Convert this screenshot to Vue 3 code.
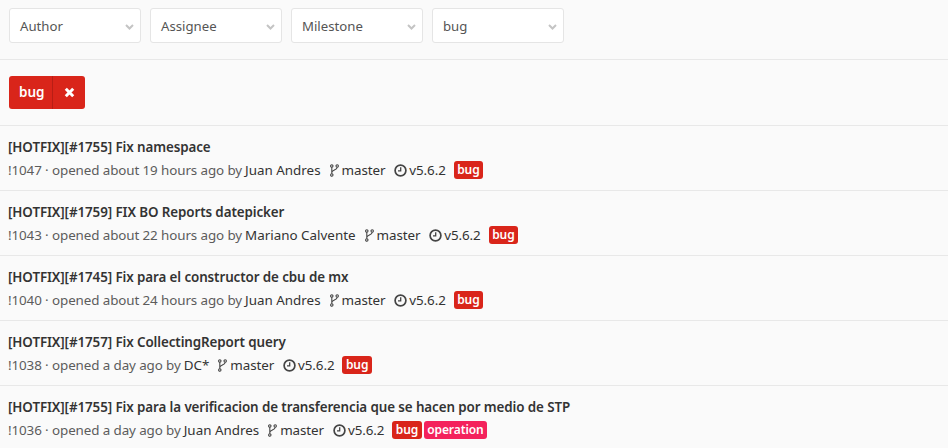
<script setup>
const filters = ["Author", "Assignee", "Milestone", "bug"];

const rows = [
  { title: "[HOTFIX][#1755] Fix namespace", id: "!1047", age: "about 19 hours ago", author: "Juan Andres", labels: ["bug"] },
  { title: "[HOTFIX][#1759] FIX BO Reports datepicker", id: "!1043", age: "about 22 hours ago", author: "Mariano Calvente", labels: ["bug"] },
  { title: "[HOTFIX][#1745] Fix para el constructor de cbu de mx", id: "!1040", age: "about 24 hours ago", author: "Juan Andres", labels: ["bug"] },
  { title: "[HOTFIX][#1757] Fix CollectingReport query", id: "!1038", age: "a day ago", author: "DC*", labels: ["bug"] },
  { title: "[HOTFIX][#1755] Fix para la verificacion de transferencia que se hacen por medio de STP", id: "!1036", age: "a day ago", author: "Juan Andres", labels: ["bug", "operation"] },
];
</script>

<template>
  <div class="page">
    <div class="filters">
      <div v-for="f in filters" :key="f" class="dropdown">
        <span>{{ f }}</span>
        <svg class="chevron" width="9" height="6" viewBox="0 0 9 6">
          <path d="M1 1 L4.5 4.5 L8 1" fill="none" stroke="#c4c4c4" stroke-width="2" />
        </svg>
      </div>
    </div>
    <div class="active">
      <div class="active-tag">
        <span class="active-name">bug</span>
        <span class="active-close">
          <svg width="11" height="11" viewBox="0 0 11 11">
            <path d="M1.8 1.8 L9.2 9.2 M9.2 1.8 L1.8 9.2" stroke="#fff" stroke-width="3" />
          </svg>
        </span>
      </div>
    </div>
    <ul class="list">
      <li v-for="r in rows" :key="r.id" class="row">
        <div class="title">{{ r.title }}</div>
        <div class="meta">
          <span class="muted">{{ r.id }} · opened {{ r.age }} by</span>
          <span class="author">{{ r.author }}</span>
          <span class="item">
            <svg class="branch" width="9" height="13" viewBox="0 0 9 13">
              <g fill="none" stroke="#444" stroke-width="1.1">
                <circle cx="1.8" cy="2" r="1.2" />
                <circle cx="7.2" cy="2" r="1.2" />
                <circle cx="1.8" cy="11" r="1.2" />
                <path d="M1.8 3.2 V9.8 M7.2 3.2 C7.2 6 1.8 6 1.8 8.5" />
              </g>
            </svg>
            master
          </span>
          <span class="item version">
            <svg class="clock" width="13" height="13" viewBox="0 0 13 13">
              <circle cx="6.5" cy="6.5" r="5.4" fill="none" stroke="#444" stroke-width="1.7" />
              <path d="M6.7 3.2 V6.9 H4" fill="none" stroke="#444" stroke-width="1.3" />
            </svg>
            v5.6.2
          </span>
          <span class="labels">
            <span v-for="l in r.labels" :key="l" class="label" :class="'label-' + l">{{ l }}</span>
          </span>
        </div>
      </li>
    </ul>
  </div>
</template>

<style>
body {
  margin: 0;
  background: #fafafa;
}
</style>

<style scoped>
.page {
  width: 948px;
  height: 448px;
  overflow: hidden;
  background: #fafafa;
  font-family: "Noto Sans", "Liberation Sans", sans-serif;
  color: #333;
}
.filters {
  display: flex;
  gap: 9px;
  height: 51px;
  padding: 8px 0 0 9px;
  border-bottom: 1px solid #e8e8e8;
}
.dropdown {
  width: 132px;
  height: 35px;
  box-sizing: border-box;
  display: flex;
  align-items: center;
  justify-content: space-between;
  padding: 0 6px 0 10px;
  background: #fff;
  border: 1px solid #e5e5e5;
  border-radius: 3px;
  font-size: 13.2px;
  color: #555;
}
.chevron {
  margin-top: 3px;
}
.active {
  height: 66px;
  box-sizing: border-box;
  padding: 16px 0 0 9px;
  border-bottom: 1px solid #e8e8e8;
}
.active-tag {
  display: inline-flex;
  height: 33px;
  background: #d9251a;
  border-radius: 3px;
  color: #fff;
  font-size: 13.5px;
  font-weight: 600;
  line-height: 32px;
}
.active-name {
  width: 44px;
  padding-left: 10px;
  box-sizing: border-box;
  border-right: 1px solid #b81e15;
}
.active-close {
  width: 32px;
  display: flex;
  align-items: center;
  justify-content: center;
}
.list {
  list-style: none;
  margin: 0;
  padding: 0;
}
.row {
  height: 65px;
  box-sizing: border-box;
  padding: 12px 0 0 8px;
  border-bottom: 1px solid #e8e8e8;
}
.title {
  font-size: 13.4px;
  font-weight: 600;
  line-height: 19px;
  letter-spacing: -0.1px;
}
.meta {
  display: flex;
  align-items: center;
  margin-top: 3px;
  height: 20px;
  font-size: 13.4px;
  letter-spacing: -0.1px;
  white-space: nowrap;
}
.muted {
  color: #5c5c5c;
}
.author {
  margin-left: 3px;
  letter-spacing: 0;
}
.item {
  display: inline-flex;
  align-items: center;
  gap: 3px;
  margin-left: 9px;
}
.version {
  gap: 2px;
}
.labels {
  display: inline-flex;
  gap: 2px;
  margin-left: 8px;
}
.label {
  height: 18px;
  line-height: 17px;
  padding: 0 3.5px;
  border-radius: 3px;
  color: #fff;
  font-size: 12px;
  font-weight: 600;
  letter-spacing: -0.1px;
}
.label-bug {
  background: #d9251a;
}
.label-operation {
  background: #f4225c;
}
</style>
